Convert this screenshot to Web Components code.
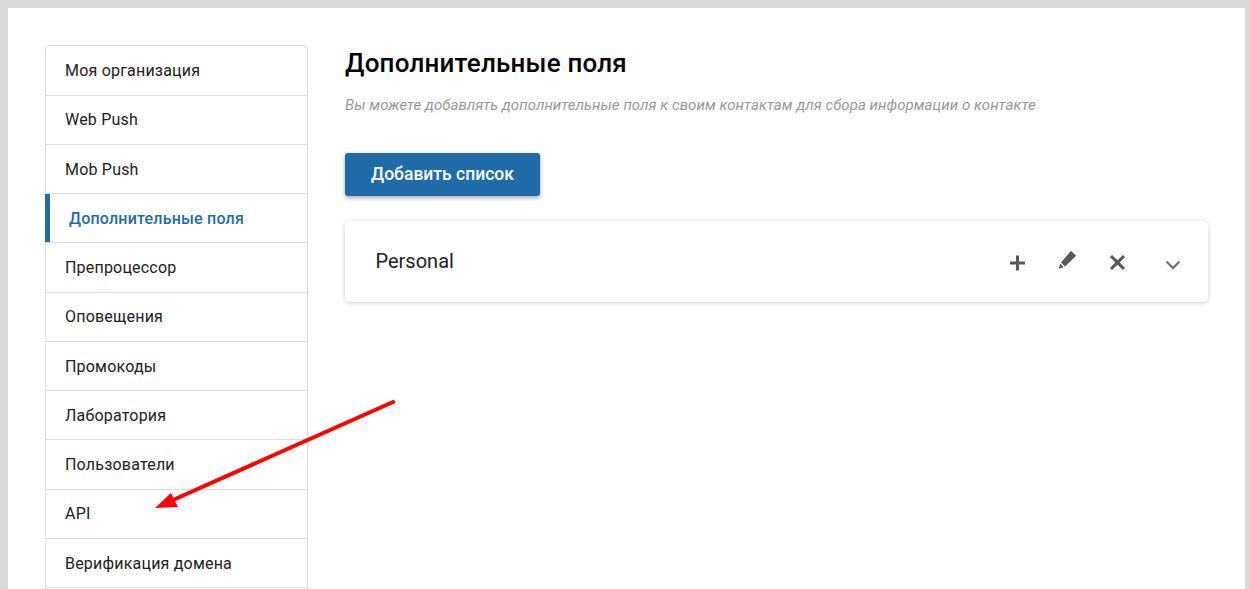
<!DOCTYPE html>
<html lang="ru">
<head>
<meta charset="utf-8">
<title>Дополнительные поля</title>
<style>
  html, body { margin: 0; height: 100%; overflow: hidden; }
  body { background: #d9d9d9; font-family: Roboto, "Noto Sans", sans-serif; letter-spacing: .2px; }
</style>
</head>
<body>
<settings-page>
  <side-menu slot="menu">
    <menu-row>Моя организация</menu-row>
    <menu-row>Web Push</menu-row>
    <menu-row>Mob Push</menu-row>
    <menu-row active>Дополнительные поля</menu-row>
    <menu-row>Препроцессор</menu-row>
    <menu-row>Оповещения</menu-row>
    <menu-row>Промокоды</menu-row>
    <menu-row>Лаборатория</menu-row>
    <menu-row>Пользователи</menu-row>
    <menu-row>API</menu-row>
    <menu-row>Верификация домена</menu-row>
    <menu-row></menu-row>
  </side-menu>
  <h1 slot="title">Дополнительные поля</h1>
  <span slot="hint">Вы можете добавлять дополнительные поля к своим контактам для сбора информации о контакте</span>
  <add-button slot="action">Добавить список</add-button>
  <field-list slot="list">Personal</field-list>
  <arrow-mark slot="overlay"></arrow-mark>
</settings-page>

<script>
  customElements.define('settings-page', class extends HTMLElement {
    constructor() {
      super();
      this.attachShadow({ mode: 'open' }).innerHTML = `
        <style>
          :host {
            display: block;
            position: relative;
            margin: 8px 5px 0 8px;
            height: 581px;
            overflow: hidden;
            background: #fff;
          }
          .cols {
            display: flex;
            gap: 37px;
            padding: 37px 37px 0 37px;
          }
          .menu { flex: 0 0 263px; }
          .main { flex: 1; min-width: 0; }
          ::slotted(h1) {
            margin: 0;
            font-size: 26px;
            line-height: 36px;
            font-weight: 500;
            color: #000;
            letter-spacing: .2px;
          }
          ::slotted([slot=hint]) {
            display: block;
            margin-top: 15px;
            font-size: 15px;
            line-height: 18px;
            font-style: italic;
            letter-spacing: .06px;
            color: #999;
          }
          .action { margin-top: 39px; }
          .list { margin-top: 25px; }
        </style>
        <div class="cols">
          <div class="menu"><slot name="menu"></slot></div>
          <div class="main">
            <slot name="title"></slot>
            <slot name="hint"></slot>
            <div class="action"><slot name="action"></slot></div>
            <div class="list"><slot name="list"></slot></div>
          </div>
        </div>
        <slot name="overlay"></slot>
      `;
    }
  });

  customElements.define('side-menu', class extends HTMLElement {
    constructor() {
      super();
      this.attachShadow({ mode: 'open' }).innerHTML = `
        <style>
          :host {
            display: block;
            box-sizing: border-box;
            border: 1px solid #ddd;
            border-bottom: 0;
            border-radius: 5px 5px 0 0;
          }
        </style>
        <slot></slot>
      `;
    }
  });

  customElements.define('menu-row', class extends HTMLElement {
    constructor() {
      super();
      this.attachShadow({ mode: 'open' }).innerHTML = `
        <style>
          :host {
            display: flex;
            align-items: center;
            box-sizing: border-box;
            height: 49.25px;
            padding: .2px 0 0 19px;
            border-bottom: 1px solid #ddd;
            font-size: 16px;
            color: #212121;
          }
          :host(:first-child) { height: 49.6px; }
          :host([active]) {
            margin-left: -1px;
            padding-left: 24px;
            font-weight: 500;
            color: #1f6ca8;
            background: linear-gradient(#1f6ca8, #1f6ca8) left top / 5px 100% no-repeat;
          }
        </style>
        <slot></slot>
      `;
    }
  });

  customElements.define('add-button', class extends HTMLElement {
    constructor() {
      super();
      this.attachShadow({ mode: 'open' }).innerHTML = `
        <style>
          :host {
            display: inline-flex;
            align-items: center;
            justify-content: center;
            box-sizing: border-box;
            width: 195px;
            height: 43px;
            padding-bottom: 2px;
            border-radius: 3px;
            background: #1f6ca8;
            box-shadow: 0 2px 4px rgba(0,0,0,.35);
            font-size: 17.500px;
            font-weight: 500;
            letter-spacing: 0;
            color: #fff;
          }
        </style>
        <slot></slot>
      `;
    }
  });

  customElements.define('field-list', class extends HTMLElement {
    constructor() {
      super();
      this.attachShadow({ mode: 'open' }).innerHTML = `
        <style>
          :host {
            display: flex;
            align-items: center;
            box-sizing: border-box;
            height: 81px;
            padding: 0 25px 0 30.500px;
            border-radius: 5px;
            background: #fff;
            box-shadow: 0 1px 5px rgba(0,0,0,.2);
            font-size: 20px;
            letter-spacing: 0;
            color: #212121;
          }
          .name { flex: 1; margin-top: -2px; }
          .icons { display: flex; align-items: center; gap: 30px; }
          svg { display: block; width: 20px; height: 20px; fill: #595959; }
          .chev { margin-left: 6px; fill: none; stroke: #777; stroke-width: 2.4; }
        </style>
        <span class="name"><slot></slot></span>
        <div class="icons">
          <svg viewBox="0 0 20 20"><path d="M9 3.500h3v6h6v3h-6v6H9v-6H3v-3h6z"/></svg>
          <svg viewBox="0 0 20 20" style="margin-top:-4px"><path d="M14.600 1.500l3.900 3.600c.4.4.4 1 0 1.400L8 16.600 4 12.600 13.300 1.600c.4-.4.9-.4 1.300-.1zM3.300 13.600l3.300 3.600L1.600 18.800z"/></svg>
          <svg viewBox="0 0 20 20"><path transform="translate(.5 .5)" d="M4.600 2.400L10 7.800l5.400-5.400 2.200 2.200L12.200 10l5.400 5.400-2.200 2.200L10 12.200l-5.400 5.400-2.200-2.200L7.800 10 2.400 4.600z"/></svg>
          <svg class="chev" viewBox="0 0 20 20" style="margin-top:6px"><path d="M3.500 6.500L10 13l6.500-6.500"/></svg>
        </div>
      `;
    }
  });

  customElements.define('arrow-mark', class extends HTMLElement {
    constructor() {
      super();
      this.attachShadow({ mode: 'open' }).innerHTML = `
        <style>
          :host { position: absolute; left: 147px; top: 392px; width: 250px; height: 120px; }
          svg { display: block; width: 100%; height: 100%; overflow: visible; }
        </style>
        <svg viewBox="0 0 250 120">
          <path d="M238 2L18 100" stroke="#f00" stroke-width="4" stroke-linecap="round" fill="none"/>
          <path d="M0 108L16 93 23 107z" fill="#f00"/>
        </svg>
      `;
    }
  });
</script>
</body>
</html>
